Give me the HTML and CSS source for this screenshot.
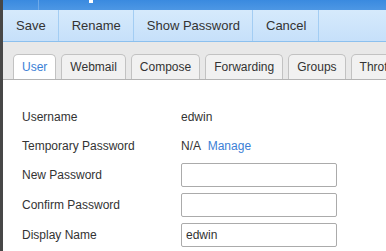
FILE: index.html
```html
<!DOCTYPE html>
<html lang="en">
<head>
    <meta charset="UTF-8">
    <title>Edit Mailbox</title>
    <link rel="stylesheet" href="styles.css">
</head>
<body>
    <div class="frame">
        <div class="topbar">
            <span class="top-seg"></span>
            <span class="top-mark"></span>
        </div>

        <div class="toolbar">
            <button class="tool-btn">Save</button>
            <button class="tool-btn">Rename</button>
            <button class="tool-btn">Show Password</button>
            <button class="tool-btn">Cancel</button>
        </div>

        <div class="tabs">
            <div class="tab active">User</div>
            <div class="tab">Webmail</div>
            <div class="tab">Compose</div>
            <div class="tab">Forwarding</div>
            <div class="tab">Groups</div>
            <div class="tab">Throttling</div>
        </div>

        <div class="form">
            <div class="label">Username</div>
            <div class="value">edwin</div>

            <div class="label">Temporary Password</div>
            <div class="value">N/A <a class="link" href="#">Manage</a></div>

            <div class="label">New Password</div>
            <div class="value"><input class="field" type="text"></div>

            <div class="label">Confirm Password</div>
            <div class="value"><input class="field" type="text"></div>

            <div class="label">Display Name</div>
            <div class="value"><input class="field" type="text" value="edwin"></div>
        </div>
    </div>
</body>
</html>
```

FILE: styles.css
```css
body {
    margin: 0;
    font-family: "Liberation Sans", Arial, sans-serif;
    color: #333;
    background: #fff;
}
.frame {
    height: 251px;
    border-left: 3px solid #474747;
    overflow: hidden;
}
.topbar {
    height: 10px;
    display: flex;
    background: linear-gradient(#3a8adf, #4d97e4);
}
.top-seg {
    width: 35px;
    border-right: 1px solid #6eaae9;
}
.top-mark {
    width: 4px;
    height: 3px;
    margin-left: 50px;
    background: #fff;
}
.toolbar {
    height: 31px;
    display: flex;
    background: linear-gradient(#d6eafc, #c6e0fa);
    border-bottom: 1px solid #8cc0ee;
}
.tool-btn {
    font-family: inherit;
    font-size: 13px;
    color: #333;
    background: none;
    border: none;
    border-right: 1px solid #a3cdf3;
    padding: 0 12px 0 13px;
    cursor: pointer;
}
.tabs {
    display: flex;
    gap: 5px;
    padding: 12px 0 0 10px;
    background: #e8e8e8;
    border-bottom: 1px solid #b4b4b4;
    white-space: nowrap;
    overflow: hidden;
}
.tab {
    flex-shrink: 0;
    height: 25px;
    line-height: 25px;
    padding: 0 8px;
    font-size: 12px;
    background: #f1f1f1;
    border: 1px solid #c2c2c2;
    border-bottom: none;
    border-radius: 5px 5px 0 0;
    box-sizing: border-box;
}
.tab.active {
    background: #fff;
    color: #3c7fd6;
    height: 26px;
    margin-bottom: -1px;
}
.form {
    display: grid;
    grid-template-columns: 159px 156px;
    grid-template-rows: 28px 29px 30px 30px 30px;
    align-items: center;
    padding: 23px 0 0 19px;
    font-size: 12px;
}
.link {
    color: #3c7fd6;
    text-decoration: none;
    margin-left: 4px;
}
.field {
    display: block;
    width: 156px;
    height: 24px;
    box-sizing: border-box;
    border: 1px solid #ababab;
    border-radius: 2px;
    padding: 0 4px;
    font-family: inherit;
    font-size: 12px;
    color: #333;
}
```
